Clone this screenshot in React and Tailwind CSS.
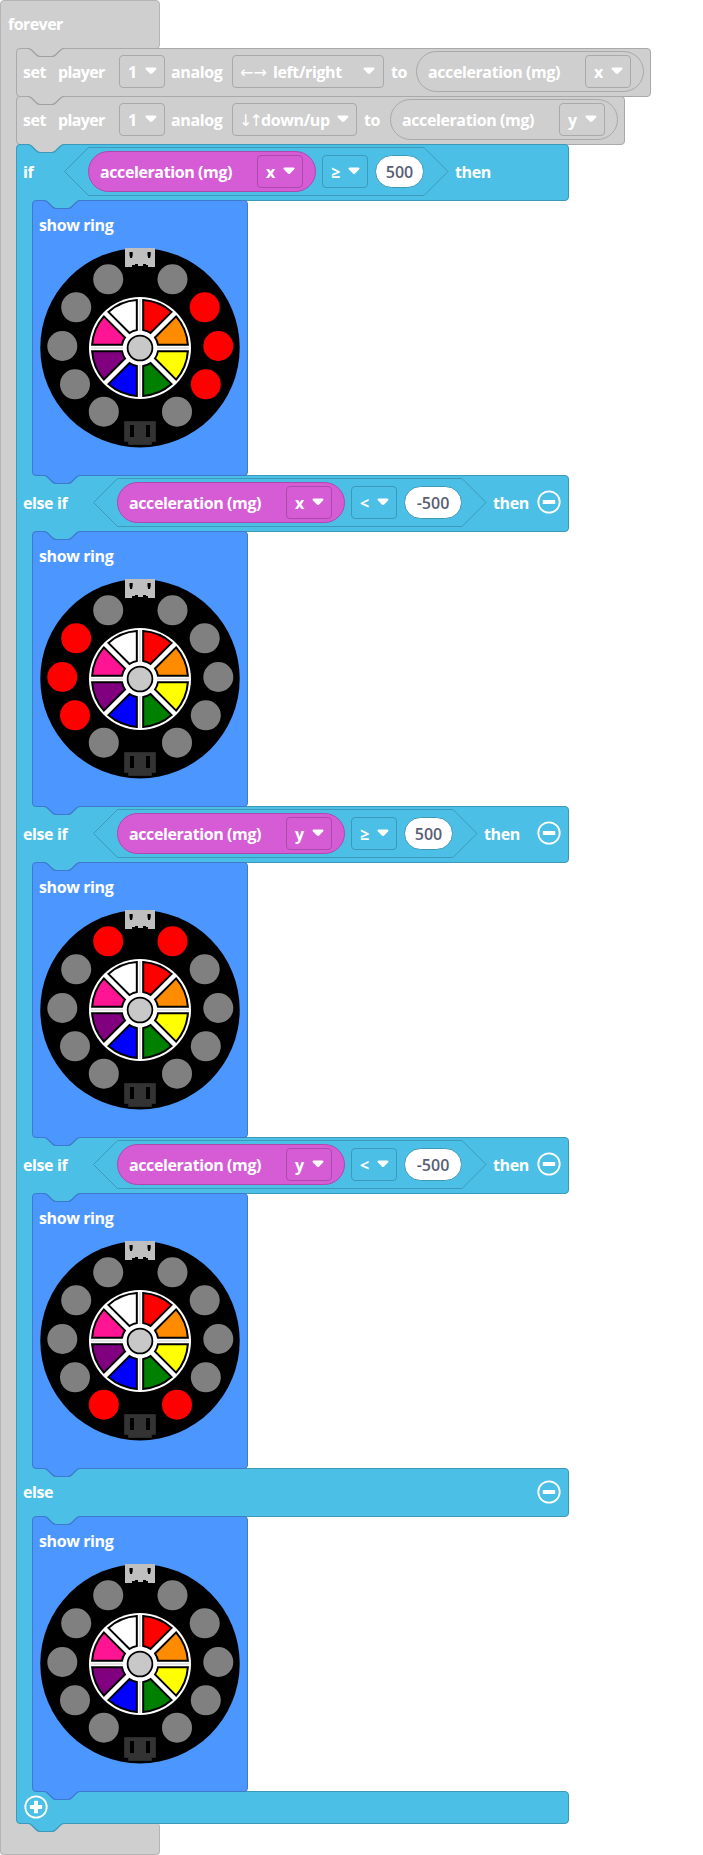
import React from 'react';

/* ---------- small pieces ---------- */

function Label({ className = '', children }) {
  return (
    <span className={`block shrink-0 whitespace-pre leading-6 tracking-[-0.4px] ${className}`}>{children}</span>
  );
}

/* Connector bump between two stacked blocks. */
function Notch({ className, fill, stroke }) {
  const d = 'M0 0.5 c2 0 3 1 4 2 l4 4 c1 1 2 2 4 2 h12 c2 0 3 -1 4 -2 l4 -4 c1 -1 2 -2 4 -2';
  return (
    <svg className={`absolute ${className}`} width="36" height="10" viewBox="0 0 36 10">
      <path d={`M0 0 V0.5 ${d.slice(6)} V0 Z`} fill={fill} />
      <path d={d} fill="none" stroke={stroke} strokeWidth="1.2" />
    </svg>
  );
}

function Caret({ className = '' }) {
  return (
    <svg className={`shrink-0 ${className}`} width="12" height="8" viewBox="0 0 12 8">
      <path
        d="M6.9 6.7 L11 2.4 C11.9 1.3 11.5 0.5 10.2 0.5 H1.8 C0.5 0.5 0.1 1.3 1 2.4 L5.1 6.7 C5.7 7.2 6.3 7.2 6.9 6.7 Z"
        fill="#fff"
      />
    </svg>
  );
}

const tones = {
  gray: 'border-[#a9a9a9]',
  cyan: 'border-[#3d99b8]',
  magenta: 'border-[#ab4aab]',
};

function Select({ tone, value, className = '' }) {
  return (
    <div
      className={`flex h-[33px] w-[46px] shrink-0 items-center rounded-[4px] border ${tones[tone]} ${className}`}
    >
      <Label className="w-[17px] pl-[8px]">{value}</Label>
      <Caret className="ml-[8px] -mt-[1px]" />
    </div>
  );
}

function WideSelect({ arrows, value, className = '', arrowClass, textClass }) {
  return (
    <div
      className={`flex h-[33px] shrink-0 items-center rounded-[4px] border border-[#a9a9a9] ${className}`}
    >
      <span className={`block shrink-0 whitespace-pre font-['Noto_Sans','DejaVu_Sans',sans-serif] font-normal leading-6 ${arrowClass}`}>
        {arrows}
      </span>
      <Label className={textClass}>{value}</Label>
      <Caret className="-mt-[1px]" />
    </div>
  );
}

function Acceleration({ tone, axis, className = '' }) {
  const fill = tone === 'magenta' ? 'bg-[#d65cd6]' : 'bg-[#cfcfcf]';
  return (
    <div
      className={`flex h-[41px] w-[228px] shrink-0 items-center rounded-full border ${tones[tone]} ${fill} ${className}`}
    >
      <Label className="w-[157px] pl-[11px]">acceleration (mg)</Label>
      <Select tone={tone} value={axis} className="ml-[11px]" />
    </div>
  );
}

function Comparison({ axis, op, number, className = '' }) {
  const wide = number.length > 3;
  const w = wide ? 393.5 : 384.5;
  return (
    <div className={`relative flex h-[49px] shrink-0 items-center ${wide ? 'w-[394px]' : 'w-[385px]'} ${className}`}>
      <svg className="absolute inset-0" width={w + 0.5} height="49" viewBox={`0 0 ${w + 0.5} 49`}>
        <path
          d={`M24.5 0.5 H${w - 24.5} L${w - 0.5} 24.5 L${w - 24.5} 48.5 H24.5 L0.5 24.5 Z`}
          fill="#4cbfe6"
          stroke="#3d99b8"
        />
      </svg>
      <div className="relative flex items-center">
        <Acceleration tone="magenta" axis={axis} className="ml-[24px]" />
        <Select tone="cyan" value={op} className="ml-[6px]" />
        <div
          className={`ml-[7px] flex h-[33px] shrink-0 items-center justify-center rounded-full border border-[#3d99b8] bg-white font-semibold leading-6 text-[#575e75] ${
            wide ? 'w-[58px]' : 'w-[49px]'
          }`}
        >
          {number}
        </div>
      </div>
    </div>
  );
}

function RoundButton({ plus, className = '' }) {
  return (
    <svg className={`shrink-0 ${className}`} width="24" height="24" viewBox="0 0 24 24">
      <circle cx="12" cy="12" r="10.7" fill="none" stroke="#fff" strokeWidth="1.8" />
      <rect x="5.8" y="10" width="12.4" height="4" fill="#fff" />
      {plus && <rect x="10" y="5.8" width="4" height="12.4" fill="#fff" />}
    </svg>
  );
}

/* ---------- ring editor ---------- */

const leds = [
  [132.5, 31.3], [164.7, 59.3], [178.3, 98], [165.8, 136.3], [137, 163.7],
  [63.8, 163.7], [35, 136.3], [22.3, 98], [36.2, 59.3], [68.2, 31.3],
];
const wheel = ['#ff0000', '#ff8c00', '#ffff00', '#008000', '#0000ff', '#800080', '#ff1493', '#ffffff'];

function wedge(i) {
  const at = (r, deg) => {
    const a = ((deg + i * 45) * Math.PI) / 180;
    return `${(100 + r * Math.sin(a)).toFixed(2)} ${(100 - r * Math.cos(a)).toFixed(2)}`;
  };
  return `M${at(18.3, 10)} L${at(48, 3.8)} A48 48 0 0 1 ${at(48, 41.2)} L${at(18.3, 35)} A18.3 18.3 0 0 0 ${at(18.3, 10)} Z`;
}

function Ring({ lit }) {
  return (
    <svg width="200" height="200" viewBox="0 0 200 200">
      <circle cx="100" cy="99.7" r="99.7" fill="#000" />
      <path d="M85 0 H115 V19 H108 V17 H106 V16 H103 V18 H98 V16 H95 V17 H92 V19 H85 Z" fill="#bfbfbf" />
      <path d="M89.5 4 H92.7 V7 L92 10 H90.2 L89.5 7 Z M107.5 4 H110.7 V7 L110 10 H108.2 L107.5 7 Z" fill="#000" />
      <path d="M84.5 173.5 H115.5 V193.5 H111.5 V196.5 H88.5 V193.5 H84.5 Z" fill="#333" stroke="#2a2a2a" />
      <path d="M90 177 H94 V189 H90 Z M106 177 H110 V189 H106 Z" fill="#000" />
      {leds.map(([x, y], i) => (
        <circle key={i} cx={x} cy={y} r="15" fill={lit.includes(i) ? '#ff0000' : '#808080'} />
      ))}
      <circle cx="100" cy="100" r="51" fill="#fff" />
      <path d="M100 51 V149 M51 100 H149" stroke="#ccc" strokeWidth="1" />
      <circle cx="100" cy="100" r="17" fill="#fff" />
      {wheel.map((c, i) => (
        <path key={c} d={wedge(i)} fill={c} stroke="#000" strokeWidth="2" />
      ))}
      <circle cx="100" cy="100" r="12.4" fill="#c8c8c8" stroke="#000" strokeWidth="1.8" />
    </svg>
  );
}

/* ---------- blocks ---------- */

function ShowRing({ lit }) {
  return (
    <div className="relative z-10 -mb-px flex">
      <div className="w-[22px] shrink-0 border-l border-[#3d99b8] bg-[#4cbfe6]" />
      <div className="relative -ml-[6px] flex h-[276px] w-[216px] flex-col rounded-[4px] border border-[#3d79cc] bg-[#4c97ff]">
        <Notch className="-top-px left-[11px]" fill="#4cbfe6" stroke="#3d79cc" />
        <Label className="ml-[6px] mt-[12px] tracking-[-0.3px]">show ring</Label>
        <div className="ml-[7px] mt-[11px]">
          <Ring lit={lit} />
        </div>
        <Notch className="left-[11px] top-[274px]" fill="#4c97ff" stroke="#3d79cc" />
      </div>
    </div>
  );
}

function Bar({ className = '', children }) {
  return (
    <div className={`relative -mb-px flex w-[553px] items-center border border-[#3d99b8] bg-[#4cbfe6] ${className}`}>
      {children}
    </div>
  );
}

function ElseIf({ axis, op, number, lit }) {
  const wide = number.length > 3;
  return (
    <>
      <Bar className="h-[57px] rounded-r-[4px] pb-[2px]">
        <Label className="w-[76px] pl-[6px]">else if</Label>
        <Comparison axis={axis} op={op} number={number} />
        <Label className="ml-[6px]">then</Label>
        <RoundButton className="-mt-[1px] ml-auto mr-[7px]" />
      </Bar>
      <ShowRing lit={lit} />
    </>
  );
}

function SetPlayer({ className, wideClass, arrows, value, arrowClass, textClass, toClass, axis }) {
  return (
    <div className={`relative -mb-px flex h-[49px] items-center rounded-[4px] border border-[#a9a9a9] bg-[#cfcfcf] pb-[2px] ${className}`}>
      <Notch className="-top-px left-[11px]" fill="#cfcfcf" stroke="#a0a0a0" />
      <Label className="w-[41px] pl-[6px]">set</Label>
      <Label className="w-[61px] tracking-[-0.65px]">player</Label>
      <Select tone="gray" value="1" />
      <Label className="ml-[6px] w-[61px]">analog</Label>
      <WideSelect className={wideClass} arrows={arrows} value={value} arrowClass={arrowClass} textClass={textClass} />
      <Label className={`ml-[7px] ${toClass}`}>to</Label>
      <Acceleration tone="gray" axis={axis} />
    </div>
  );
}

export default function App() {
  return (
    <div className="flex min-h-[1855px] w-[703px] flex-col items-start bg-white font-['Open_Sans','Noto_Sans',sans-serif] text-base font-bold text-white">
      <div className="-mb-px h-[49px] w-[160px] rounded-t-[4px] rounded-br-[4px] border border-[#b5b5b5] bg-[#cfcfcf]">
        <Label className="ml-[7px] mt-[11px] tracking-[-0.55px]">forever</Label>
      </div>

      <div className="relative z-10 flex">
        <div className="-mb-px w-[22px] shrink-0 border-l border-[#b5b5b5] bg-[#cfcfcf]" />
        <div className="relative -ml-[6px] flex flex-col items-start">
          <SetPlayer
            className="w-[635px]"
            wideClass="w-[152px]"
            arrows="←→"
            arrowClass="ml-[7px] w-[33px]"
            value="left/right"
            textClass="w-[90px] tracking-[-0.2px]"
            toClass="w-[25px]"
            axis="x"
          />
          <SetPlayer
            className="w-[609px]"
            wideClass="w-[125px]"
            arrows="↓↑"
            arrowClass="ml-[6px] w-[22px] tracking-[-3px]"
            value="down/up"
            textClass="w-[76px]"
            toClass="w-[26px]"
            axis="y"
          />

          <Bar className="h-[57px] rounded-r-[4px] rounded-tl-[4px] pb-[2px]">
            <Notch className="-top-px left-[11px]" fill="#cfcfcf" stroke="#3d99b8" />
            <Label className="w-[47px] pl-[6px]">if</Label>
            <Comparison axis="x" op="≥" number="500" />
            <Label className="ml-[6px]">then</Label>
          </Bar>
          <ShowRing lit={[1, 2, 3]} />

          <ElseIf axis="x" op="<" number="-500" lit={[6, 7, 8]} />
          <ElseIf axis="y" op="≥" number="500" lit={[0, 9]} />
          <ElseIf axis="y" op="<" number="-500" lit={[4, 5]} />

          <Bar className="h-[49px] rounded-r-[4px] pb-[2px]">
            <Label className="pl-[6px]">else</Label>
            <RoundButton className="ml-auto mr-[7px]" />
          </Bar>
          <ShowRing lit={[]} />

          <Bar className="z-0 h-[33px] rounded-b-[4px] rounded-tr-[4px]">
            <RoundButton plus className="-mt-[2px] ml-[7px]" />
            <Notch className="left-[11px] top-[31px]" fill="#4cbfe6" stroke="#3d99b8" />
          </Bar>
        </div>
      </div>

      <div className="h-[32px] w-[160px] rounded-b-[4px] rounded-tr-[4px] border border-t-0 border-[#b5b5b5] bg-[#cfcfcf]" />
    </div>
  );
}
